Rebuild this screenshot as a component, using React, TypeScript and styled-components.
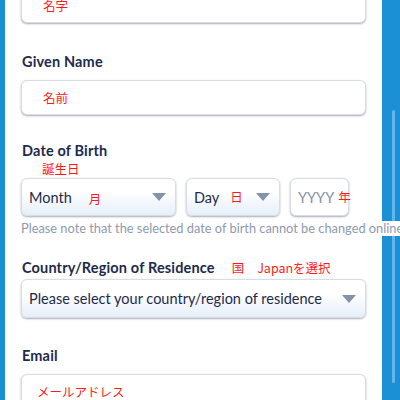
import * as React from "react";
import styled, { createGlobalStyle } from "styled-components";

const GlobalStyle = createGlobalStyle`
  html, body {
    margin: 0;
    padding: 0;
    overflow: hidden;
    background: #1b90d5;
  }
  body {
    font-family: Lato, "Noto Sans", "Noto Sans CJK JP", sans-serif;
  }
`;

function Caret() {
  return (
    <CaretIcon viewBox="0 0 14 8" aria-hidden="true">
      <path d="M0 0 H14 L7 8 Z" fill="#8593a8" />
    </CaretIcon>
  );
}

function App() {
  return (
    <Page>
      <GlobalStyle />
      <Panel>
        <TopInput>
          <Note $indent={21}>名字</Note>
        </TopInput>

        <Field $space={31}>
          <Label>Given Name</Label>
          <Input>
            <Note $indent={21}>名前</Note>
          </Input>
        </Field>

        <Field $space={28}>
          <Label $gap={0}>Date of Birth</Label>
          <Annotation>誕生日</Annotation>
          <DateRow>
            <Select $width={155}>
              <SelectText>Month</SelectText>
              <Note $indent={17} $low>月</Note>
              <Spacer />
              <Caret />
            </Select>
            <Select $width={94}>
              <SelectText>Day</SelectText>
              <Note $indent={11}>日</Note>
              <Spacer />
              <Caret />
            </Select>
            <YearBox>
              <Placeholder>YYYY</Placeholder>
              <Note $indent={4}>年</Note>
            </YearBox>
          </DateRow>
          <Hint>Please note that the selected date of birth cannot be changed online</Hint>
        </Field>

        <Field $space={24}>
          <LabelRow>
            <Label $gap={0}>Country/Region of Residence</Label>
            <Note $indent={17}>国</Note>
            <Note $indent={13}>Japanを選択</Note>
          </LabelRow>
          <Select $width={345} $tall>
            <SelectText>Please select your country/region of residence</SelectText>
            <Spacer />
            <Caret />
          </Select>
        </Field>

        <Field $space={30}>
          <Label>Email</Label>
          <Input>
            <Note $indent={15}>メールアドレス</Note>
          </Input>
        </Field>
      </Panel>
      <ScrollTrack>
        <Thumb />
      </ScrollTrack>
    </Page>
  );
}

const Page = styled.div`
  display: flex;
  width: 400px;
  height: 400px;
  background: #1b90d5;
  overflow: hidden;
`;

const Panel = styled.div`
  width: 377px;
  margin-left: 5px;
  background: #ffffff;
  padding: 0 16px;
  box-sizing: border-box;
  display: flex;
  flex-direction: column;
  flex-shrink: 0;

  & > * {
    flex-shrink: 0;
  }
`;

const ScrollTrack = styled.div`
  flex: 1;
  padding-top: 110px;
  padding-left: 10px;
`;

const Thumb = styled.div`
  width: 3px;
  height: 273px;
  border-radius: 2px;
  background: #62b5e9;
`;

const Field = styled.div<{ $space: number }>`
  display: flex;
  flex-direction: column;
  margin-top: ${(p) => p.$space}px;

  & > * {
    flex-shrink: 0;
  }
`;

const Label = styled.div<{ $gap?: number }>`
  font-size: 14.5px;
  line-height: 16px;
  font-weight: 700;
  letter-spacing: 0.15px;
  color: #1d2b4c;
  margin-bottom: ${(p) => p.$gap ?? 10}px;
  padding-left: 1px;
  white-space: nowrap;
`;

const LabelRow = styled.div`
  display: flex;
  align-items: baseline;
  margin-bottom: 3px;
`;

const Annotation = styled.div`
  align-self: flex-start;
  margin: 3px 0 2px 21px;
  font-family: "Noto Sans CJK JP", sans-serif;
  font-size: 12.5px;
  line-height: 14px;
  color: #ff1a1a;
`;

const Note = styled.span<{ $indent: number; $low?: boolean }>`
  margin-left: ${(p) => p.$indent}px;
  font-family: "Noto Sans CJK JP", sans-serif;
  font-size: 12.5px;
  line-height: 16px;
  color: #ff1a1a;
  white-space: nowrap;
  position: relative;
  top: ${(p) => (p.$low ? 2 : 0)}px;
`;

const Input = styled.div`
  height: 35px;
  box-sizing: border-box;
  border: 1px solid #d9dde3;
  border-radius: 6px;
  box-shadow: 0 1px 2px rgba(60, 70, 90, 0.45);
  background: #ffffff;
  display: flex;
  align-items: center;
`;

const TopInput = styled(Input)`
  margin-top: -12px;
`;

const DateRow = styled.div`
  display: flex;
  gap: 10px;
`;

const Select = styled.div<{ $width: number; $tall?: boolean }>`
  width: ${(p) => p.$width}px;
  height: ${(p) => (p.$tall ? 39 : 38)}px;
  box-sizing: border-box;
  padding: 0 9px 0 7px;
  border: 1px solid #d9dde3;
  border-radius: 6px;
  box-shadow: 0 1px 2px rgba(60, 70, 90, 0.45);
  background: linear-gradient(#ffffff 0%, #ffffff 35%, #e6eff9 100%);
  display: flex;
  align-items: center;
`;

const YearBox = styled.div`
  width: 59px;
  height: 38px;
  box-sizing: border-box;
  padding-left: 7px;
  border: 1px solid #d9dde3;
  border-radius: 6px;
  box-shadow: 0 1px 2px rgba(60, 70, 90, 0.45);
  background: #ffffff;
  display: flex;
  align-items: center;
`;

const SelectText = styled.span`
  font-size: 14.5px;
  color: #1d2b4c;
  white-space: nowrap;
`;

const Placeholder = styled.span`
  font-size: 14.5px;
  color: #8593a8;
`;

const Spacer = styled.span`
  flex: 1;
`;

const CaretIcon = styled.svg`
  width: 14px;
  height: 8px;
  flex-shrink: 0;
`;

const Hint = styled.div`
  display: inline-block;
  align-self: flex-start;
  margin-top: 5px;
  white-space: nowrap;
  font-size: 12.8px;
  line-height: 15px;
  color: #8e9aae;
  background: #ffffff;
  position: relative;
  z-index: 1;
`;

export default App;
